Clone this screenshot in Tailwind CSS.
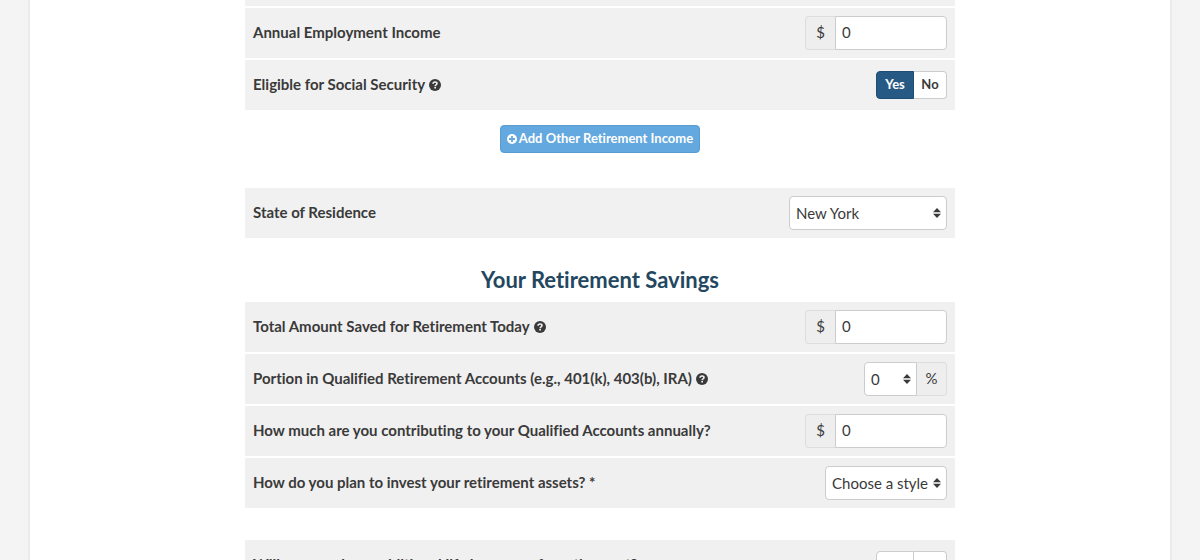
<!DOCTYPE html>
<html lang="en">
<head>
<meta charset="utf-8">
<meta name="viewport" content="width=device-width, initial-scale=1">
<title>Retirement Calculator</title>
<script src="https://cdn.jsdelivr.net/npm/@tailwindcss/browser@4"></script>
</head>
<body class="h-screen overflow-hidden bg-[#f4f4f4] font-['Lato',sans-serif] text-[15px] text-[#3a3a3a] [font-variant-ligatures:none]">
<svg class="hidden">
  <symbol id="help" viewBox="0 0 12 12">
    <circle cx="6" cy="6" r="6" fill="currentColor"/>
    <path d="M4 4.8C4.1 3.5 5 3 6 3s2 .6 2 1.6c0 1.2-1.8 1.2-1.8 2.4" fill="none" stroke="#f1f1f1" stroke-width="1.6"/>
    <path d="M5.3 7.8h1.7v1.6H5.3z" fill="#f1f1f1"/>
  </symbol>
  <symbol id="sort" viewBox="0 0 8 10">
    <path d="M4 0 8 4.2H0zM4 10 0 5.8h8z" fill="currentColor"/>
  </symbol>
</svg>
<main class="mx-7 min-h-full border-x-2 border-[#ebebeb] bg-white">
  <form class="mx-auto flex max-w-[710px] flex-col">
    <div class="flex flex-col gap-0.5">
      <div class="h-1.5 bg-[#f1f1f1]"></div>
      <div class="flex h-[50px] items-center justify-between bg-[#f1f1f1] px-2">
        <label for="income" class="pb-0.5 font-bold">Annual Employment Income</label>
        <div class="flex h-[34px]">
          <span class="flex w-[30px] items-center justify-center rounded-l border border-r-0 border-[#ddd] bg-[#eee] pb-0.5">$</span>
          <input id="income" value="0" class="w-28 rounded-r border border-[#ccc] bg-white px-1.5 pb-0.5">
        </div>
      </div>
      <div class="flex h-[50px] items-center justify-between bg-[#f1f1f1] px-2">
        <span class="flex items-center gap-1 font-bold"><span class="pb-0.5">Eligible for Social Security</span> <svg class="size-3"><use href="#help"/></svg></span>
        <div class="flex h-7 text-[13px] font-bold">
          <button type="button" class="w-[38px] rounded-l border border-[#204d74] bg-[#265a85] text-white">Yes</button>
          <button type="button" class="w-[33px] rounded-r border border-l-0 border-[#ccc] bg-white">No</button>
        </div>
      </div>
    </div>
    <button type="button" class="mt-[15px] flex h-7 w-[200px] items-center justify-center gap-0.5 self-center rounded border border-[#5a9bd0] bg-[#63a8de] text-[13px] font-bold text-white">
      <svg class="size-2.5" viewBox="0 0 10 10"><circle cx="5" cy="5" r="5" fill="currentColor"/><path d="M5 2v6M2 5h6" stroke="#63a8de" stroke-width="1.8"/></svg>
      Add Other Retirement Income
    </button>
    <div class="mt-[35px] flex h-[50px] items-center justify-between bg-[#f1f1f1] px-2">
      <label for="state" class="pb-0.5 font-bold">State of Residence</label>
      <div class="relative">
        <select id="state" class="h-[34px] w-[158px] appearance-none rounded border border-[#ccc] bg-white px-1.5"><option>New York</option></select>
        <svg class="pointer-events-none absolute top-3 right-1.5 h-2.5 w-2"><use href="#sort"/></svg>
      </div>
    </div>
    <h2 class="mt-7 text-center text-[22px] leading-7 font-bold text-[#23475f]">Your Retirement Savings</h2>
    <div class="mt-2 flex flex-col gap-0.5">
      <div class="flex h-[50px] items-center justify-between bg-[#f1f0f1] px-2">
        <label for="saved" class="flex items-center gap-1 font-bold"><span class="pb-0.5">Total Amount Saved for Retirement Today</span> <svg class="size-3"><use href="#help"/></svg></label>
        <div class="flex h-[34px]">
          <span class="flex w-[30px] items-center justify-center rounded-l border border-r-0 border-[#ddd] bg-[#eee] pb-0.5">$</span>
          <input id="saved" value="0" class="w-28 rounded-r border border-[#ccc] bg-white px-1.5 pb-0.5">
        </div>
      </div>
      <div class="flex h-[50px] items-center justify-between bg-[#f1f0f1] px-2">
        <label for="portion" class="flex items-center gap-1 font-bold"><span class="pb-0.5">Portion in Qualified Retirement Accounts (e.g., 401(k), 403(b), IRA)</span> <svg class="size-3"><use href="#help"/></svg></label>
        <div class="flex h-[34px]">
          <div class="relative">
            <select id="portion" class="h-[34px] w-[53px] appearance-none rounded-l border border-[#ccc] bg-white px-1.5"><option>0</option></select>
            <svg class="pointer-events-none absolute top-3 right-1.5 h-2.5 w-2"><use href="#sort"/></svg>
          </div>
          <span class="flex w-[30px] items-center justify-center rounded-r border border-l-0 border-[#ddd] bg-[#eee] pb-0.5">%</span>
        </div>
      </div>
      <div class="flex h-[50px] items-center justify-between bg-[#f1f0f1] px-2">
        <label for="contribution" class="pb-0.5 font-bold">How much are you contributing to your Qualified Accounts annually?</label>
        <div class="flex h-[34px]">
          <span class="flex w-[30px] items-center justify-center rounded-l border border-r-0 border-[#ddd] bg-[#eee] pb-0.5">$</span>
          <input id="contribution" value="0" class="w-28 rounded-r border border-[#ccc] bg-white px-1.5 pb-0.5">
        </div>
      </div>
      <div class="flex h-[50px] items-center justify-between bg-[#f1f0f1] px-2">
        <label for="style" class="pb-0.5 font-bold">How do you plan to invest your retirement assets? *</label>
        <div class="relative">
          <select id="style" class="h-[34px] w-[122px] appearance-none rounded border border-[#ccc] bg-white px-1.5"><option>Choose a style</option></select>
          <svg class="pointer-events-none absolute top-3 right-1.5 h-2.5 w-2"><use href="#sort"/></svg>
        </div>
      </div>
    </div>
    <div class="mt-8 flex h-[50px] items-center justify-between bg-[#f1f0f1] px-2">
      <span class="pb-0.5 font-bold">Will you purchase additional life insurance for retirement?</span>
      <div class="flex h-7 text-[13px] font-bold">
        <button type="button" class="w-[38px] rounded-l border border-[#ccc] bg-white pt-1">Yes</button>
        <button type="button" class="w-[33px] rounded-r border border-l-0 border-[#ccc] bg-white pt-1">No</button>
      </div>
    </div>
  </form>
</main>
</body>
</html>
